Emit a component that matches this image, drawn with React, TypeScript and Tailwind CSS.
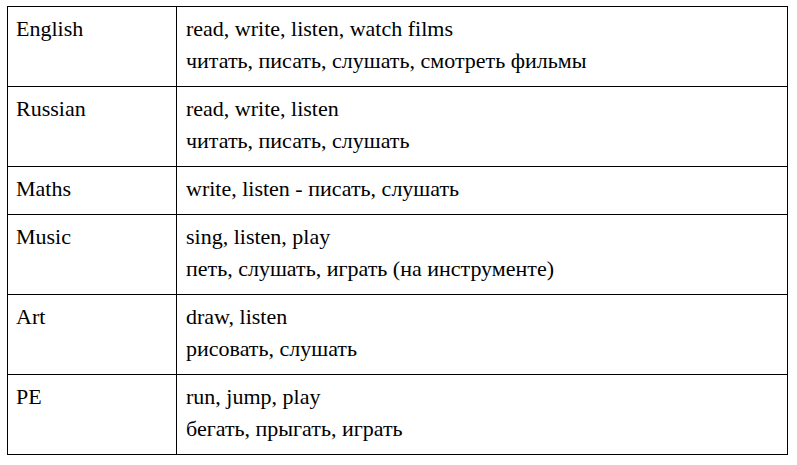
const ROWS: { subject: string; lines: string[] }[] = [
  { subject: 'English', lines: ['read, write, listen, watch films', 'читать, писать, слушать, смотреть фильмы'] },
  { subject: 'Russian', lines: ['read, write, listen', 'читать, писать, слушать'] },
  { subject: 'Maths', lines: ['write, listen - писать, слушать'] },
  { subject: 'Music', lines: ['sing, listen, play', 'петь, слушать, играть (на инструменте)'] },
  { subject: 'Art', lines: ['draw, listen', 'рисовать, слушать'] },
  { subject: 'PE', lines: ['run, jump, play', 'бегать, прыгать, играть'] },
]

const CELL = 'border border-black pt-[6px] pb-[9px] align-top font-serif text-xl leading-8 text-black'
const TEXT =
  "[font-family:'Liberation_Serif','Times_New_Roman',Tinos,'DejaVu_Serif',serif] text-[22px] leading-8 text-black"

const App = () => {
  return (
    <div className="min-h-[465px] bg-white pl-[7px] pt-[6px]">
      <table className="w-[781px] border-collapse">
        <tbody>
          {ROWS.map((row) => (
            <tr key={row.subject}>
              <td className={`w-[169px] pl-[8px] ${CELL}`}>
                <div className={TEXT}>{row.subject}</div>
              </td>
              <td className={`pl-[9px] ${CELL}`}>
                {row.lines.map((line) => (
                  <div key={line} className={TEXT}>
                    {line}
                  </div>
                ))}
              </td>
            </tr>
          ))}
        </tbody>
      </table>
    </div>
  )
}

export default App
